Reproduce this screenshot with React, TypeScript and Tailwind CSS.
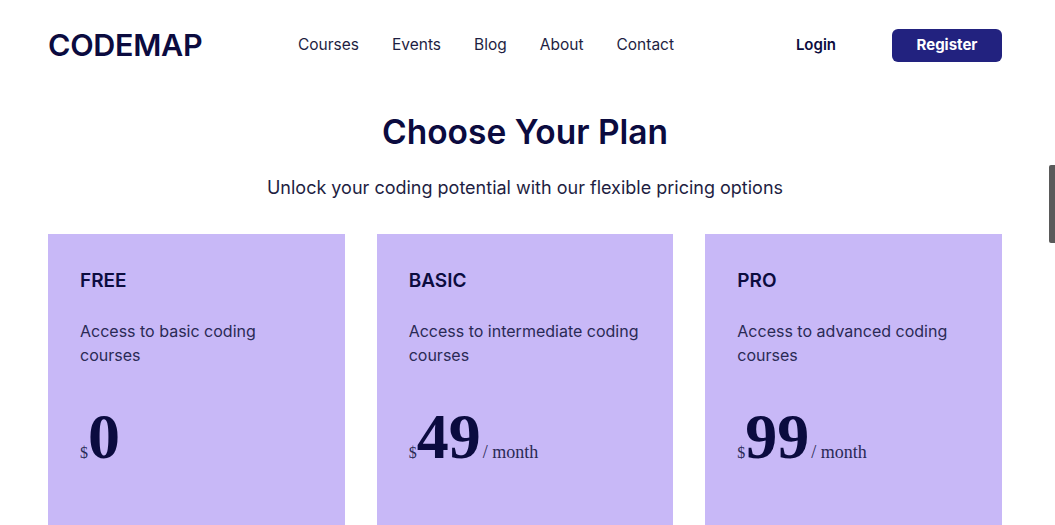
import React from "react";

const plans = [
  { name: "FREE", desc: "Access to basic coding courses", price: "0", month: false },
  { name: "BASIC", desc: "Access to intermediate coding courses", price: "49", month: true },
  { name: "PRO", desc: "Access to advanced coding courses", price: "99", month: true },
];

export default function App() {
  return (
    <div
      className="relative w-[1055px] h-[525px] overflow-hidden bg-white text-[#0c0c3f]"
      style={{ fontFamily: "Inter, 'Noto Sans', sans-serif" }}
    >
      <div className="w-[1050px] px-12">
        <header className="h-[90px] flex items-center">
          <div className="text-[30.5px] font-semibold tracking-[-0.3px] text-[#0b0b3f] w-[250px]">CODEMAP</div>
          <nav className="flex gap-[33px] text-[15.5px] text-[#1e1e42]">
            <a>Courses</a>
            <a>Events</a>
            <a>Blog</a>
            <a>About</a>
            <a>Contact</a>
          </nav>
          <div className="ml-auto flex items-center gap-[56px]">
            <a className="text-[15px] font-semibold text-[#0c0c3f]">Login</a>
            <button className="w-[110px] h-[33px] rounded-[6px] bg-[#22227f] text-white text-[15px] font-bold">
              Register
            </button>
          </div>
        </header>
        <section className="text-center">
          <h1 className="mt-[20px] text-[33.5px] leading-[44px] font-semibold text-[#0b0b3f]">Choose Your Plan</h1>
          <p className="mt-[22px] text-[18px] leading-[24px] text-[#1e1e42]">
            Unlock your coding potential with our flexible pricing options
          </p>
        </section>
        <div className="mt-[34px] grid grid-cols-3 gap-[32px]">
          {plans.map((p) => (
            <div key={p.name} className="bg-[#c8b8f7] h-[320px] px-8 pt-[35px]">
              <div className="text-[19px] leading-[24px] font-semibold text-[#0c0c3f]">{p.name}</div>
              <p className="mt-[26px] text-[16px] leading-[24px] text-[#2a2a55]">{p.desc}</p>
              <div className="mt-[38px] flex items-baseline" style={{ fontFamily: "'Liberation Serif', serif" }}>
                <span className="text-[16px] text-[#2a2a55]">$</span>
                <span className="text-[64px] leading-[64px] font-bold text-[#0b0b3f]">{p.price}</span>
                {p.month && <span className="ml-[2px] text-[18px] text-[#2a2a55]">/ month</span>}
              </div>
            </div>
          ))}
        </div>
      </div>
      <div className="absolute right-0 top-[165px] w-[6px] h-[78px] rounded-l-[2px] bg-[#5a5a5a]" />
    </div>
  );
}
